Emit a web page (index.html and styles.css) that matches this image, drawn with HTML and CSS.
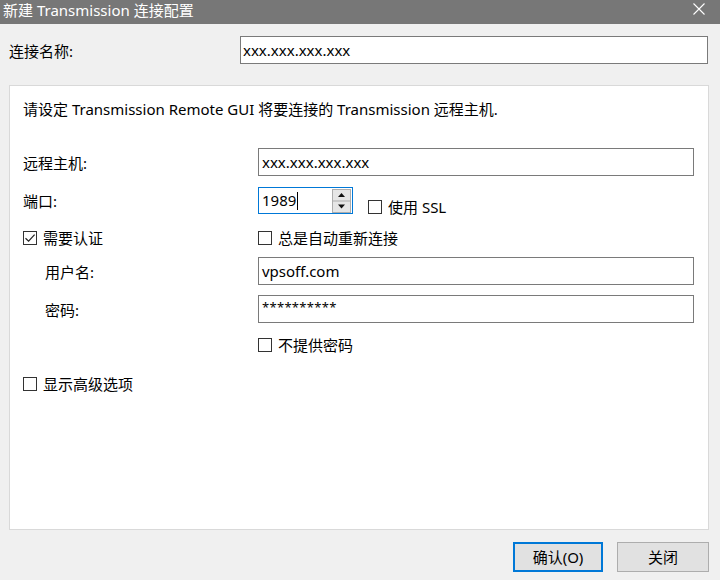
FILE: index.html
```html
<!DOCTYPE html>
<html lang="zh-CN">
<head>
    <meta charset="UTF-8">
    <meta name="viewport" content="width=device-width, initial-scale=1.0">
    <title>新建 Transmission 连接配置</title>
    <link rel="stylesheet" href="styles.css">
</head>
<body>
    <div class="window">
        <!-- Title bar -->
        <div class="titlebar">
            <span class="title">新建 Transmission 连接配置</span>
            <svg class="close-icon" width="12" height="12" viewBox="0 0 12 12">
                <path d="M0.5 0.5 L11.5 11.5 M11.5 0.5 L0.5 11.5" stroke="#fff" stroke-width="1.1" fill="none"/>
            </svg>
        </div>

        <div class="content">
            <div class="name-row">
                <span class="name-label">连接名称:</span>
                <div class="field name-field">xxx.xxx.xxx.xxx</div>
            </div>

            <!-- Connection settings panel -->
            <div class="panel">
                <p class="desc">请设定 Transmission Remote GUI 将要连接的 Transmission 远程主机.</p>

                <div class="row row-host">
                    <span class="label-col">远程主机:</span>
                    <div class="field wide">xxx.xxx.xxx.xxx</div>
                </div>

                <div class="row row-port">
                    <span class="label-col">端口:</span>
                    <div class="spin">
                        <span class="spin-value">1989</span><span class="caret"></span>
                        <svg class="spin-buttons" width="19" height="24" viewBox="0 0 19 24">
                            <rect x="0.5" y="0.5" width="18" height="23" fill="#e6e6e6" stroke="#adadad"/>
                            <line x1="1" y1="12" x2="18" y2="12" stroke="#adadad"/>
                            <path d="M6 8 L13 8 L9.5 4 Z" fill="#111"/>
                            <path d="M6 15.5 L13 15.5 L9.5 19.5 Z" fill="#111"/>
                        </svg>
                    </div>
                    <label class="check ssl"><span class="box"></span>使用 SSL</label>
                </div>

                <div class="row row-auth">
                    <div class="label-col">
                        <label class="check"><span class="box">
                            <svg width="12" height="12" viewBox="0 0 12 12"><path d="M1.5 6.2 L4.6 9.2 L10.6 2.6" stroke="#222" stroke-width="1.2" fill="none"/></svg>
                        </span>需要认证</label>
                    </div>
                    <label class="check"><span class="box"></span>总是自动重新连接</label>
                </div>

                <div class="row row-user">
                    <span class="label-col indent">用户名:</span>
                    <div class="field wide">vpsoff.com</div>
                </div>

                <div class="row row-pass">
                    <span class="label-col indent">密码:</span>
                    <div class="field wide password">**********</div>
                </div>

                <div class="row row-nopass">
                    <span class="label-col"></span>
                    <label class="check"><span class="box"></span>不提供密码</label>
                </div>

                <div class="row row-advanced">
                    <label class="check"><span class="box"></span>显示高级选项</label>
                </div>
            </div>

            <div class="buttons">
                <button class="btn btn-default">确认(O)</button>
                <button class="btn btn-close">关闭</button>
            </div>
        </div>
    </div>
</body>
</html>
```

FILE: styles.css
```css
body {
    margin: 0;
    padding: 0;
    font-family: "Noto Sans", "Noto Sans CJK SC", sans-serif;
    font-size: 15px;
    color: #000;
    background-color: #f0f0f0;
}

.window {
    width: 720px;
    height: 580px;
    display: flex;
    flex-direction: column;
    background-color: #f0f0f0;
    overflow: hidden;
}

/* Title bar */
.titlebar {
    height: 24px;
    background-color: #777777;
    display: flex;
    justify-content: space-between;
    align-items: flex-start;
    flex-shrink: 0;
}

.title {
    color: #fff;
    line-height: 20px;
    padding-left: 3px;
}

.close-icon {
    margin: 3px 15px 0 0;
}

.content {
    padding: 12px 11px 0 9px;
}

.name-row {
    display: flex;
    align-items: center;
    height: 28px;
}

.name-label {
    width: 231px;
}

.field {
    box-sizing: border-box;
    height: 28px;
    border: 1px solid #7a7a7a;
    background-color: #fff;
    display: flex;
    align-items: center;
    padding: 0 3px 1px;
    white-space: nowrap;
}

.name-field {
    flex: 1;
    padding-left: 2px;
    margin-right: 1px;
}

/* White settings panel */
.panel {
    box-sizing: border-box;
    height: 445px;
    margin-top: 21px;
    padding: 13px 14px 0 13px;
    background-color: #fff;
    border: 1px solid #d9d9d9;
}

.desc {
    margin: 0;
    line-height: 20px;
}

.row {
    display: flex;
    align-items: center;
}

.label-col {
    width: 235px;
    flex-shrink: 0;
}

.indent {
    padding-left: 22px;
    box-sizing: border-box;
}

.wide {
    flex: 1;
}

.row-host {
    margin-top: 29px;
}

.row-port {
    margin-top: 11px;
    height: 27px;
}

.row-auth {
    margin-top: 14px;
    height: 20px;
}

.row-user {
    margin-top: 9px;
}

.row-pass {
    margin-top: 10px;
}

.row-nopass {
    margin-top: 12px;
    height: 20px;
}

.row-advanced {
    margin-top: 19px;
    height: 20px;
}

.password {
    font-size: 13px;
    padding-bottom: 4px;
    letter-spacing: 0.3px;
}

/* Port spin box */
.spin {
    box-sizing: border-box;
    width: 95px;
    height: 27px;
    border: 1px solid #0078d7;
    background-color: #fff;
    display: flex;
    align-items: center;
    padding-left: 3px;
}

.spin-value {
    padding-bottom: 1px;
}

.caret {
    width: 1px;
    height: 18px;
    background-color: #000;
    margin-left: 1px;
}

.spin-buttons {
    margin-left: auto;
    margin-right: 1px;
}

/* Checkboxes */
.check {
    display: flex;
    align-items: center;
    line-height: 20px;
    white-space: nowrap;
}

.box {
    box-sizing: border-box;
    width: 14px;
    height: 14px;
    border: 1px solid #333;
    background-color: #fff;
    margin-right: 6px;
    display: flex;
    align-items: center;
    justify-content: center;
}

.ssl {
    margin-left: 15px;
    margin-top: 12px;
}

/* Dialog buttons */
.buttons {
    display: flex;
    justify-content: flex-end;
    gap: 14px;
    margin-top: 12px;
}

.btn {
    box-sizing: border-box;
    height: 30px;
    font-family: inherit;
    font-size: 15px;
    color: #000;
    background-color: #e1e1e1;
    border: 1px solid #adadad;
    padding: 0 0 2px;
}

.btn-default {
    width: 90px;
    border: 2px solid #0078d7;
}

.btn-close {
    width: 92px;
}
```
